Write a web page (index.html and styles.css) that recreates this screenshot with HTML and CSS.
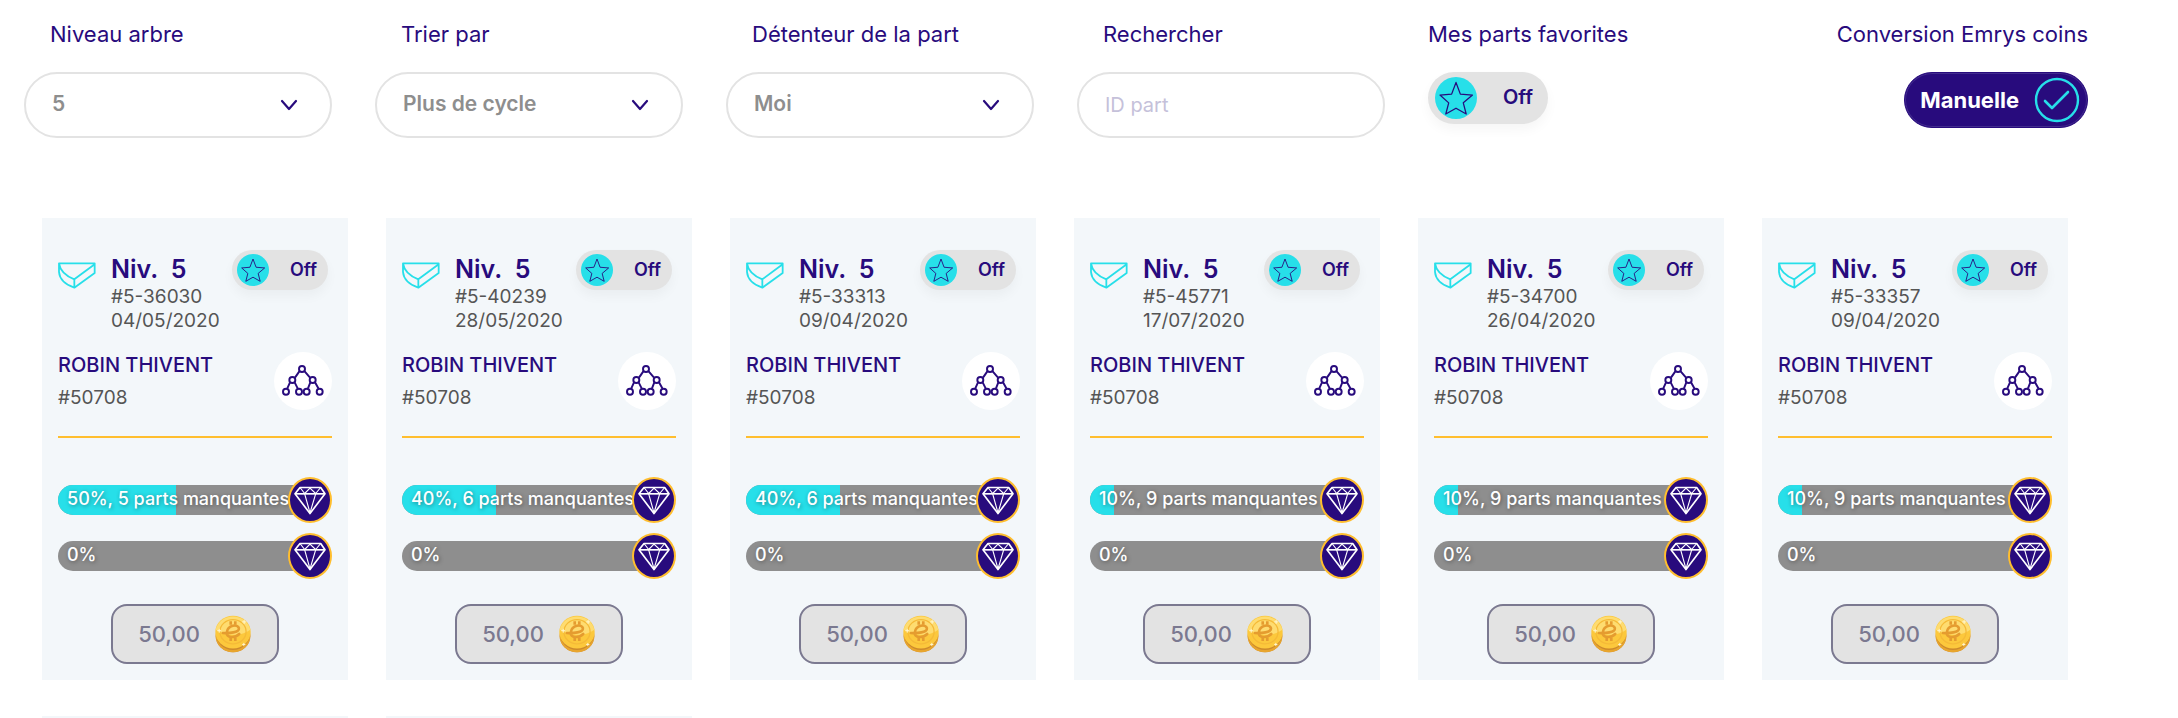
FILE: index.html
```html
<!DOCTYPE html>
<html lang="fr">
<head>
<meta charset="utf-8">
<meta name="viewport" content="width=device-width, initial-scale=1">
<title>Mes parts</title>
<link rel="stylesheet" href="styles.css">
</head>
<body>
<svg class="sprite" aria-hidden="true">
  <symbol id="star" viewBox="636 146 70 70"><path d="M671 149L680 173L705 175L686 191L692 214L671 202L650 214L656 191L638 175L662 173Z" fill="none" stroke="#280b7d" stroke-width="2.6" stroke-linejoin="round"/></symbol>
  <symbol id="wedge" viewBox="86 155 114 81"><path d="M89 159H196V188L135 232C112 224 91 208 89 185V159C92 180 110 197 135 207L196 162M135 207V232" fill="none" stroke="#27dfe9" stroke-width="5.4" stroke-linejoin="round"/></symbol>
  <symbol id="tree" viewBox="732 426 174 174"><g fill="none" stroke="#280b7d" stroke-width="5.8"><path d="M808 484L795 503M824 484L840 503M780 517L772 535M794 517L803 535M841 517L834 535M855 517L865 535"/><circle cx="816" cy="477" r="9"/><circle cx="787" cy="510" r="9"/><circle cx="848" cy="510" r="9"/><circle cx="768" cy="545" r="9"/><circle cx="807" cy="545" r="9"/><circle cx="830" cy="545" r="9"/><circle cx="869" cy="545" r="9"/></g></symbol>
  <symbol id="gem" viewBox="790 115 96 86"><g fill="none" stroke="#fff" stroke-linejoin="round"><path d="M808 119H870L883 138L838 197L793 138Z" stroke-width="5"/><path d="M793 138H883" stroke-width="5"/><path d="M808 119L822 137L838 121L855 137L870 119M822 138L838 195L855 138" stroke-width="3.4"/></g></symbol>
  <symbol id="coin" viewBox="553 488 116 120"><ellipse cx="611" cy="554" rx="53" ry="50" fill="#cd8a2c"/><path d="M558 545A53 52 0 0 0 664 545V554A53 50 0 0 1 558 554Z" fill="#e8a52e"/><ellipse cx="611" cy="542" rx="54" ry="50" fill="#fcc83c"/><path d="M558 535A54 50 0 0 1 664 535Q640 552 611 550Q580 549 558 535Z" fill="#fedc70"/><ellipse cx="611" cy="541" rx="40" ry="37" fill="none" stroke="#f5ba38" stroke-width="4"/><path d="M580 545C598 546 632 544 629 530C626 517 595 519 592 543C591 561 617 561 630 548" fill="none" stroke="#e59c2f" stroke-width="8" stroke-linecap="round"/><path d="M604 520V509M618 520V509M604 569V559M618 569V559" stroke="#e59c2f" stroke-width="8"/><path d="M645 505V517M639 511H651M569 532V544M563 538H575M644 575V585M639 580H649" stroke="#fff6cf" stroke-width="3"/></symbol>
  <symbol id="chevron" viewBox="0 0 18 12"><path d="M2 2L9 10L16 2" fill="none" stroke="#280b7d" stroke-width="2.2" stroke-linecap="round" stroke-linejoin="round"/></symbol>
  <symbol id="check" viewBox="0 0 46 46"><g fill="none" stroke="#27dfe9" stroke-linecap="round" stroke-linejoin="round"><circle cx="23" cy="23" r="21" stroke-width="2.4"/><path d="M11 24L18 31L34 15" stroke-width="2.6"/></g></symbol>
</svg>

<form class="filters">
  <div class="field">
    <label class="caption" for="level">Niveau arbre</label>
    <div class="pick"><select id="level"><option>5</option></select><svg><use href="#chevron"/></svg></div>
  </div>
  <div class="field">
    <label class="caption" for="sort">Trier par</label>
    <div class="pick"><select id="sort"><option>Plus de cycle</option></select><svg><use href="#chevron"/></svg></div>
  </div>
  <div class="field">
    <label class="caption" for="owner">Détenteur de la part</label>
    <div class="pick"><select id="owner"><option>Moi</option></select><svg><use href="#chevron"/></svg></div>
  </div>
  <div class="field">
    <label class="caption" for="search">Rechercher</label>
    <input class="search" id="search" type="text" placeholder="ID part">
  </div>
  <div class="options">
    <div class="option">
      <span class="caption" id="fav-caption">Mes parts favorites</span>
      <label class="toggle toggle-large"><span class="knob"><input type="checkbox" aria-labelledby="fav-caption"><svg><use href="#star"/></svg></span>Off</label>
    </div>
    <div class="option option-end">
      <span class="caption">Conversion Emrys coins</span>
      <button class="mode" type="button">Manuelle<svg><use href="#check"/></svg></button>
    </div>
  </div>
</form>

<main class="cards">
  <article class="card">
    <header class="head"><svg class="wedge"><use href="#wedge"/></svg><div class="ident"><h2>Niv.&nbsp; 5</h2><p>#5-36030</p><p>04/05/2020</p></div><label class="toggle"><span class="knob"><input type="checkbox"><svg><use href="#star"/></svg></span>Off</label></header>
    <div class="owner"><div><h3>ROBIN THIVENT</h3><p>#50708</p></div><button class="tree" type="button" aria-label="Arbre"><svg><use href="#tree"/></svg></button></div>
    <div class="gauges">
      <div class="gauge"><div class="bar"><div class="fill" style="width:50%"></div><span>50%, 5 parts manquantes</span></div><i class="gem"><svg><use href="#gem"/></svg></i></div>
      <div class="gauge"><div class="bar"><div class="fill" style="width:0%"></div><span>0%</span></div><i class="gem"><svg><use href="#gem"/></svg></i></div>
    </div>
    <button class="price" type="button">50,00<svg><use href="#coin"/></svg></button>
  </article>
  <article class="card">
    <header class="head"><svg class="wedge"><use href="#wedge"/></svg><div class="ident"><h2>Niv.&nbsp; 5</h2><p>#5-40239</p><p>28/05/2020</p></div><label class="toggle"><span class="knob"><input type="checkbox"><svg><use href="#star"/></svg></span>Off</label></header>
    <div class="owner"><div><h3>ROBIN THIVENT</h3><p>#50708</p></div><button class="tree" type="button" aria-label="Arbre"><svg><use href="#tree"/></svg></button></div>
    <div class="gauges">
      <div class="gauge"><div class="bar"><div class="fill" style="width:40%"></div><span>40%, 6 parts manquantes</span></div><i class="gem"><svg><use href="#gem"/></svg></i></div>
      <div class="gauge"><div class="bar"><div class="fill" style="width:0%"></div><span>0%</span></div><i class="gem"><svg><use href="#gem"/></svg></i></div>
    </div>
    <button class="price" type="button">50,00<svg><use href="#coin"/></svg></button>
  </article>
  <article class="card">
    <header class="head"><svg class="wedge"><use href="#wedge"/></svg><div class="ident"><h2>Niv.&nbsp; 5</h2><p>#5-33313</p><p>09/04/2020</p></div><label class="toggle"><span class="knob"><input type="checkbox"><svg><use href="#star"/></svg></span>Off</label></header>
    <div class="owner"><div><h3>ROBIN THIVENT</h3><p>#50708</p></div><button class="tree" type="button" aria-label="Arbre"><svg><use href="#tree"/></svg></button></div>
    <div class="gauges">
      <div class="gauge"><div class="bar"><div class="fill" style="width:40%"></div><span>40%, 6 parts manquantes</span></div><i class="gem"><svg><use href="#gem"/></svg></i></div>
      <div class="gauge"><div class="bar"><div class="fill" style="width:0%"></div><span>0%</span></div><i class="gem"><svg><use href="#gem"/></svg></i></div>
    </div>
    <button class="price" type="button">50,00<svg><use href="#coin"/></svg></button>
  </article>
  <article class="card">
    <header class="head"><svg class="wedge"><use href="#wedge"/></svg><div class="ident"><h2>Niv.&nbsp; 5</h2><p>#5-45771</p><p>17/07/2020</p></div><label class="toggle"><span class="knob"><input type="checkbox"><svg><use href="#star"/></svg></span>Off</label></header>
    <div class="owner"><div><h3>ROBIN THIVENT</h3><p>#50708</p></div><button class="tree" type="button" aria-label="Arbre"><svg><use href="#tree"/></svg></button></div>
    <div class="gauges">
      <div class="gauge"><div class="bar"><div class="fill" style="width:10%"></div><span>10%, 9 parts manquantes</span></div><i class="gem"><svg><use href="#gem"/></svg></i></div>
      <div class="gauge"><div class="bar"><div class="fill" style="width:0%"></div><span>0%</span></div><i class="gem"><svg><use href="#gem"/></svg></i></div>
    </div>
    <button class="price" type="button">50,00<svg><use href="#coin"/></svg></button>
  </article>
  <article class="card">
    <header class="head"><svg class="wedge"><use href="#wedge"/></svg><div class="ident"><h2>Niv.&nbsp; 5</h2><p>#5-34700</p><p>26/04/2020</p></div><label class="toggle"><span class="knob"><input type="checkbox"><svg><use href="#star"/></svg></span>Off</label></header>
    <div class="owner"><div><h3>ROBIN THIVENT</h3><p>#50708</p></div><button class="tree" type="button" aria-label="Arbre"><svg><use href="#tree"/></svg></button></div>
    <div class="gauges">
      <div class="gauge"><div class="bar"><div class="fill" style="width:10%"></div><span>10%, 9 parts manquantes</span></div><i class="gem"><svg><use href="#gem"/></svg></i></div>
      <div class="gauge"><div class="bar"><div class="fill" style="width:0%"></div><span>0%</span></div><i class="gem"><svg><use href="#gem"/></svg></i></div>
    </div>
    <button class="price" type="button">50,00<svg><use href="#coin"/></svg></button>
  </article>
  <article class="card">
    <header class="head"><svg class="wedge"><use href="#wedge"/></svg><div class="ident"><h2>Niv.&nbsp; 5</h2><p>#5-33357</p><p>09/04/2020</p></div><label class="toggle"><span class="knob"><input type="checkbox"><svg><use href="#star"/></svg></span>Off</label></header>
    <div class="owner"><div><h3>ROBIN THIVENT</h3><p>#50708</p></div><button class="tree" type="button" aria-label="Arbre"><svg><use href="#tree"/></svg></button></div>
    <div class="gauges">
      <div class="gauge"><div class="bar"><div class="fill" style="width:10%"></div><span>10%, 9 parts manquantes</span></div><i class="gem"><svg><use href="#gem"/></svg></i></div>
      <div class="gauge"><div class="bar"><div class="fill" style="width:0%"></div><span>0%</span></div><i class="gem"><svg><use href="#gem"/></svg></i></div>
    </div>
    <button class="price" type="button">50,00<svg><use href="#coin"/></svg></button>
  </article>
  <div class="card-edge"></div>
  <div class="card-edge"></div>
</main>
</body>
</html>
```
FILE: styles.css
```css
* { box-sizing: border-box; }

body {
  margin: 0;
  background: #fff;
  color: #280b7d;
  font-family: Inter, "Liberation Sans", sans-serif;
  font-size: 18px;
}

h2, h3, p { margin: 0; }

button, input, select { font-family: inherit; color: inherit; margin: 0; }

svg { display: block; flex: none; }

.sprite { display: none; }

/* Filters */
.filters {
  display: grid;
  grid-template-columns: repeat(4, minmax(0, 14fr)) minmax(0, 30fr);
  column-gap: 43px;
  padding: 20px 90px 80px 24px;
}

.caption {
  display: block;
  font-size: 22px;
  line-height: 28px;
  margin-bottom: 24px;
  white-space: nowrap;
}

.field .caption { padding-left: 26px; }

.pick { display: grid; align-items: center; }

.pick > * { grid-area: 1 / 1; }

.pick svg {
  width: 18px;
  height: 12px;
  justify-self: end;
  margin-right: 34px;
  pointer-events: none;
}

.pick select, .search {
  width: 100%;
  height: 66px;
  border: 2px solid #e3e3e3;
  border-radius: 33px;
  background: #fff;
  padding: 0 26px;
  font-size: 20px;
  outline: none;
}

.pick select {
  appearance: none;
  color: #8e8e8e;
  font-size: 21px;
  font-weight: 600;
  padding: 0 60px 4px 26px;
}

.search::placeholder { color: #c5c1da; opacity: 1; }

.options { display: flex; justify-content: space-between; }

.option { display: flex; flex-direction: column; align-items: flex-start; }

.option-end { align-items: flex-end; }

.toggle {
  display: flex;
  align-items: center;
  justify-content: space-between;
  width: 96px;
  height: 40px;
  padding: 0 11px 2px 5px;
  border-radius: 20px;
  background: #e3e3e3;
  box-shadow: 0 6px 12px rgba(0, 0, 0, 0.04);
  font-size: 18px;
  font-weight: 600;
}

.knob { display: grid; place-items: center; padding-top: 2px; }

.knob > * { grid-area: 1 / 1; }

.knob input {
  appearance: none;
  width: 32px;
  height: 32px;
  border-radius: 50%;
  background: #27dfe9;
}

.knob svg { width: 24px; height: 24px; pointer-events: none; }

.toggle-large {
  width: 120px;
  height: 52px;
  padding: 0 15px 2px 7px;
  border-radius: 26px;
  font-size: 20px;
}

.toggle-large input { width: 42px; height: 42px; }

.toggle-large svg { width: 34px; height: 34px; }

.mode {
  display: flex;
  align-items: center;
  gap: 15px;
  height: 56px;
  padding: 0 7px 0 15px;
  border: 1px solid #280b7d;
  border-radius: 28px;
  background: #280b7d;
  box-shadow: inset 0 0 0 1px #432c8e;
  color: #fff;
  font-size: 22px;
  font-weight: 700;
}

.mode svg { width: 46px; height: 46px; }

/* Cards */
.cards {
  display: grid;
  grid-template-columns: repeat(6, minmax(0, 1fr));
  gap: 36px 38px;
  padding: 0 110px 0 42px;
}

.card {
  display: flex;
  flex-direction: column;
  background: #f3f7fa;
  padding: 32px 16px 16px;
}

.card-edge { height: 2px; background: #f3f7fa; }

.head { display: flex; align-items: flex-start; }

.wedge { width: 38px; height: 27px; margin: 12px 15px 0 0; }

.ident { flex: 1; min-width: 0; color: #555; white-space: nowrap; }

.ident h2 {
  color: #280b7d;
  font-size: 25px;
  font-weight: 600;
  line-height: 31px;
  padding-top: 4px;
}

.ident p { font-size: 19px; line-height: 24px; }

.head .toggle { flex: none; margin-right: 4px; }

.owner {
  display: flex;
  justify-content: space-between;
  align-items: center;
  margin-top: 15px;
  padding-bottom: 22px;
  border-bottom: 2px solid #ffbe2e;
}

.owner h3 { font-size: 20px; font-weight: 500; line-height: 34px; white-space: nowrap; }

.owner p { color: #555; font-size: 19px; line-height: 32px; }

.tree { border: 0; padding: 0; border-radius: 50%; background: #fff; }

.tree svg { width: 58px; height: 58px; }

.gauges { display: grid; gap: 10px; padding: 39px 0 25px; }

.gauge { display: flex; align-items: center; }

.bar {
  display: grid;
  flex: 1;
  height: 30px;
  border-radius: 15px 0 0 15px;
  background: #8e8e8e;
  overflow: hidden;
}

.bar > * { grid-area: 1 / 1; }

.fill { background: #27dfe9; }

.bar span {
  padding-left: 9px;
  color: #fff;
  font-size: 18px;
  font-weight: 500;
  line-height: 28px;
  white-space: nowrap;
  text-shadow: 1px 1px 4px rgba(0, 0, 0, 0.4);
}

.gem {
  display: grid;
  place-items: center;
  width: 44px;
  height: 46px;
  margin-left: -6px;
  border: 2px solid #ffbe2e;
  border-radius: 50%;
  background: #280b7d;
}

.gem svg { width: 32px; height: 29px; }

.price {
  display: flex;
  align-items: center;
  justify-content: center;
  gap: 14px;
  align-self: center;
  width: 168px;
  height: 60px;
  border: 2px solid #7b7990;
  border-radius: 16px;
  background: #e3e3e3;
  color: #7b7990;
  font-size: 22px;
  font-weight: 500;
}

.price svg { width: 38px; height: 40px; }
```
